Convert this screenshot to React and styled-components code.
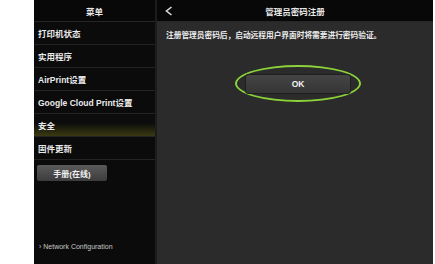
import React from "react";
import styled, { createGlobalStyle } from "styled-components";

const Global = createGlobalStyle`
  html, body { margin: 0; padding: 0; background: #fff; }
  body { font-family: "Liberation Sans", "Noto Sans CJK SC", sans-serif; }
`;

const Screen = styled.div`
  display: flex;
  height: 264px;
  padding-left: 34px;
  padding-right: 2px;
  box-sizing: border-box;
`;

const Side = styled.div`
  width: 121px;
  background: #0b0b0b;
  display: flex;
  flex-direction: column;
  border-right: 2px solid #1c1c1c;
`;

const Header = styled.div`
  height: 22px;
  background: #080808;
  border-bottom: 1px solid #262626;
  color: #e8e8e8;
  font-size: 8.5px;
  font-weight: bold;
  display: flex;
  align-items: center;
  justify-content: center;
  position: relative;
  box-sizing: border-box;
`;

const Item = styled.div`
  height: 23px;
  box-sizing: border-box;
  padding-left: 4px;
  display: flex;
  align-items: center;
  color: #eaeaea;
  font-size: 8.5px;
  font-weight: bold;
  border-bottom: 1px solid #242424;
  background: ${(p) =>
    p.active ? "linear-gradient(#0c0c0c 40%, #3a3a12 100%)" : "#0b0b0b"};
`;

const Manual = styled.div`
  margin: 5px 0 0 3px;
  width: 70px;
  height: 16px;
  background: linear-gradient(#5a5a5a, #3c3c3c);
  border-radius: 2px;
  color: #f0f0f0;
  font-size: 8px;
  font-weight: bold;
  display: flex;
  align-items: center;
  justify-content: center;
`;

const Spacer = styled.div`
  flex: 1;
`;

const NetLink = styled.div`
  color: #c8c8c8;
  font-size: 7px;
  padding: 0 0 14px 5px;
`;

const Main = styled.div`
  flex: 1;
  background: #2b2b2b;
  display: flex;
  flex-direction: column;
`;

const Back = styled.svg`
  position: absolute;
  left: 8px;
  top: 6px;
`;

const Message = styled.div`
  color: #ececec;
  font-size: 7.7px;
  font-weight: bold;
  padding: 7px 0 0 9px;
`;

const Center = styled.div`
  display: flex;
  justify-content: center;
  padding: 25px 0 0 6px;
`;

const Ring = styled.div`
  width: 122px;
  height: 33px;
  border: 2.5px solid #8bd23a;
  border-radius: 50%;
  display: flex;
  align-items: center;
  justify-content: center;
`;

const OkButton = styled.div`
  width: 104px;
  height: 18px;
  background: linear-gradient(#454545, #353535);
  border: 1px solid #1f1f1f;
  border-radius: 3px;
  color: #f2f2f2;
  font-size: 8.5px;
  font-weight: bold;
  display: flex;
  align-items: center;
  justify-content: center;
`;

export default function App() {
  return (
    <>
      <Global />
      <Screen>
        <Side>
          <Header>菜单</Header>
          <Item>打印机状态</Item>
          <Item>实用程序</Item>
          <Item>AirPrint设置</Item>
          <Item>Google Cloud Print设置</Item>
          <Item active>安全</Item>
          <Item>固件更新</Item>
          <Manual>手册(在线)</Manual>
          <Spacer />
          <NetLink>› Network Configuration</NetLink>
        </Side>
        <Main>
          <Header>
            <Back width="8" height="10" viewBox="0 0 8 10">
              <polyline points="6.5,1 1.5,5 6.5,9" fill="none" stroke="#dcdcdc" strokeWidth="1.6" />
            </Back>
            管理员密码注册
          </Header>
          <Message>注册管理员密码后，启动远程用户界面时将需要进行密码验证。</Message>
          <Center>
            <Ring>
              <OkButton>OK</OkButton>
            </Ring>
          </Center>
        </Main>
      </Screen>
    </>
  );
}
